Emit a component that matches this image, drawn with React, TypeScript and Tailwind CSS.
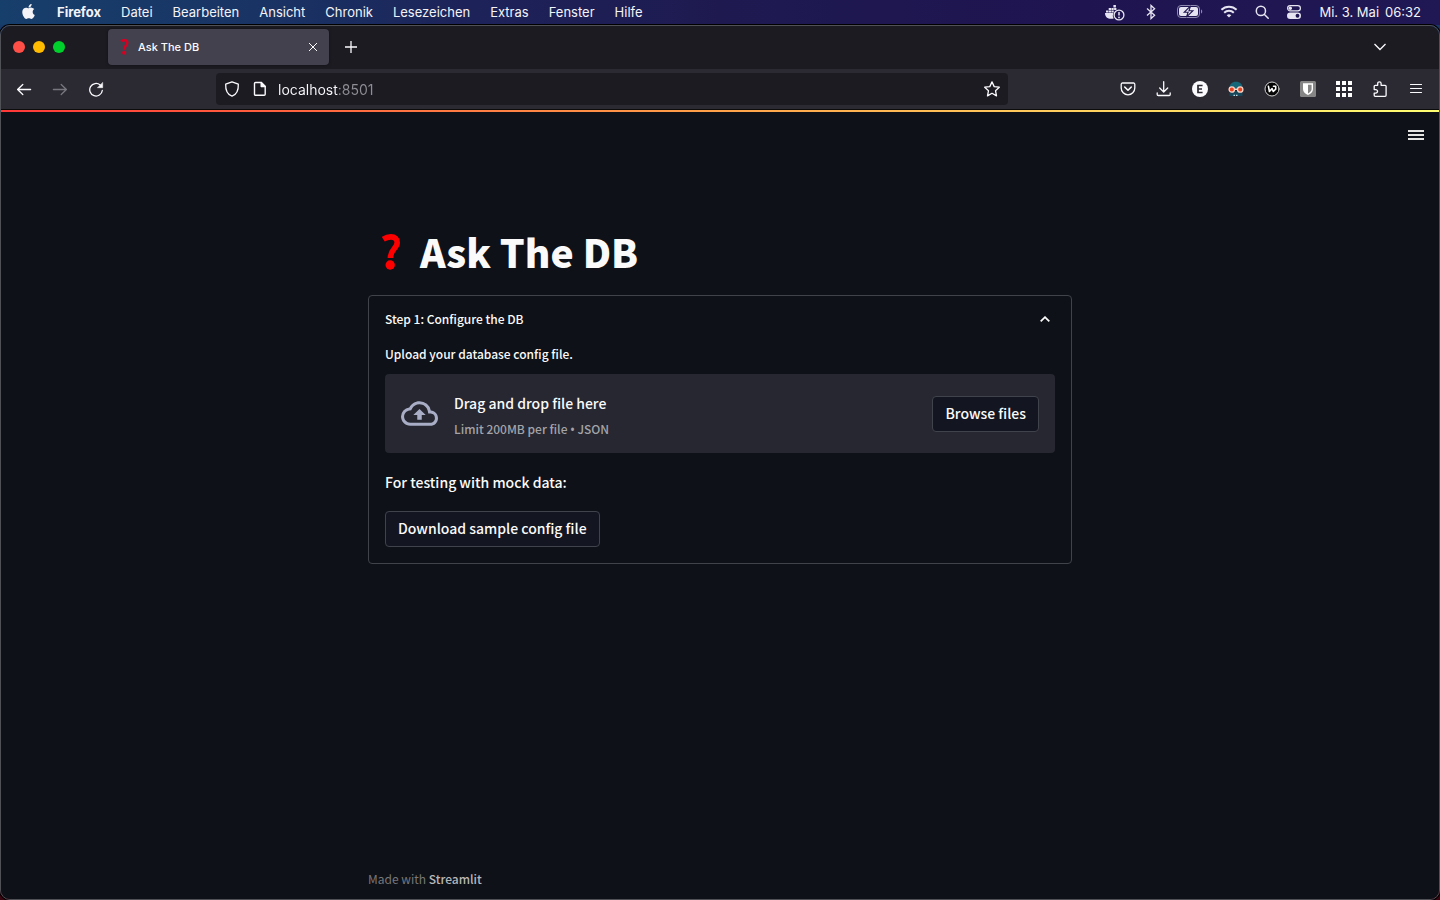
import type { ReactNode } from "react";
import { FaApple } from "react-icons/fa";

const MENUS = ["Datei", "Bearbeiten", "Ansicht", "Chronik", "Lesezeichen", "Extras", "Fenster", "Hilfe"];

function QuestionMark({ className }: { className: string }) {
  return (
    <svg viewBox="0 0 18 36" className={className} fill="none" stroke="currentColor" aria-hidden="true">
      <path d="M1.200 5.200C4 3.400 6.500 2.900 9 2.900c3.800 0 6.200 2 6.200 5.500 0 6-6.800 6.600-6.800 15.600" strokeWidth="5.600" />
      <circle cx="8.200" cy="31" r="4.700" fill="currentColor" stroke="none" />
    </svg>
  );
}

function DockerIcon() {
  return (
    <svg viewBox="0 0 20 18" className="h-[18px] w-5" aria-hidden="true">
      <g fill="#e6e4f0">
        <path d="M1 7.500h2.300v2H1zM3.700 7.500H6v2H3.700zM6.400 7.500h2.300v2H6.400zM3.700 5H6v2H3.700zM6.400 5h2.300v2H6.400zM9.100 5h2.300v2H9.100zM8.400 2h2.500v2.500H8.400z" />
        <path d="M0 10h8.300a6 6 0 0 0 .4 5.500C4 16.500 0 15 0 10z" />
      </g>
      <circle cx="14" cy="12" r="4.900" fill="none" stroke="#e6e4f0" strokeWidth="1.300" />
      <path d="M14 9v3.600" stroke="#e6e4f0" strokeWidth="1.500" />
      <circle cx="14" cy="14.400" r=".9" fill="#e6e4f0" />
    </svg>
  );
}

function BatteryIcon() {
  return (
    <svg viewBox="0 0 26 13" className="h-[13px] w-[26px]" aria-hidden="true">
      <rect x=".5" y=".5" width="22" height="12" rx="3.500" fill="none" stroke="#8d89ae" />
      <rect x="2" y="2" width="19" height="9" rx="2" fill="#e6e4f0" />
      <path d="M24 4.500c1.600.4 1.600 3.600 0 4z" fill="#8d89ae" />
      <path d="M13.600.8 7.200 7.300h3.900L9.400 12.200l6.500-6.500H12z" fill="#e6e4f0" stroke="#1f1652" strokeWidth="1.100" />
    </svg>
  );
}

function WifiIcon() {
  return (
    <svg viewBox="0 0 18 13" className="h-[13px] w-[18px]" fill="none" stroke="#e6e4f0" strokeWidth="2" aria-hidden="true">
      <path d="M1.400 4.800a10.900 10.900 0 0 1 15.200 0M4.200 7.800a6.900 6.900 0 0 1 9.600 0" />
      <path d="M9 12.600 6.700 10.300a3.300 3.300 0 0 1 4.600 0z" fill="#e6e4f0" stroke="none" />
    </svg>
  );
}

function ControlCenterIcon() {
  return (
    <svg viewBox="0 0 16 14" className="h-[14px] w-4" aria-hidden="true">
      <rect x="1.600" y=".6" width="12.800" height="5.300" rx="2.650" fill="none" stroke="#e6e4f0" strokeWidth="1.200" />
      <circle cx="4.300" cy="3.250" r="1.700" fill="#e6e4f0" />
      <rect x="1" y="7.500" width="14" height="6.500" rx="3.250" fill="#e6e4f0" />
      <circle cx="11.500" cy="10.750" r="1.900" fill="#1f1652" />
    </svg>
  );
}

function MenuBar() {
  return (
    <header className="flex h-[25px] shrink-0 items-center justify-between bg-[linear-gradient(90deg,#173f6c_0%,#193263_20%,#1d2359_32%,#1e1a50_50%,#1f1450_75%,#1f1854_100%)] pr-[19px] pb-[2px] pl-[21px] text-[13px] leading-4 text-[#f4f3f8]">
      <nav aria-label="Menüleiste" className="flex items-center gap-5">
        <button type="button" aria-label="Apple" className="mr-px">
          <FaApple className="h-[17px] w-[15px]" />
        </button>
        <button type="button" className="font-bold">Firefox</button>
        {MENUS.map((name) => (
          <button key={name} type="button">
            {name}
          </button>
        ))}
      </nav>
      <div className="flex items-center gap-[17px]">
        <DockerIcon />
        <svg viewBox="0 0 18 16" className="h-4 w-[18px]" fill="none" stroke="#e6e4f0" strokeWidth="1.300" aria-hidden="true">
          <path d="m5 4.600 7.600 6.700L9 14.600V1.400l3.600 3.300L5 11.400" />
        </svg>
        <BatteryIcon />
        <WifiIcon />
        <svg viewBox="0 0 14 14" className="size-[14px]" fill="none" stroke="#e6e4f0" strokeWidth="1.500" aria-hidden="true">
          <circle cx="5.900" cy="5.900" r="4.600" />
          <path d="m9.200 9.200 4 4" strokeLinecap="round" />
        </svg>
        <ControlCenterIcon />
        <div className="flex gap-[6px]">
          <span>Mi. 3. Mai</span>
          <time>06:32</time>
        </div>
      </div>
    </header>
  );
}

function TabStrip() {
  return (
    <div className="flex h-[43px] shrink-0 items-center bg-[#1c1b22] pb-[2px] pl-3">
      <div className="flex gap-2">
        <button type="button" aria-label="Schließen" className="size-3 rounded-full bg-[#ff4f47]" />
        <button type="button" aria-label="Minimieren" className="size-3 rounded-full bg-[#ffbb00]" />
        <button type="button" aria-label="Vollbild" className="size-3 rounded-full bg-[#00d02c]" />
      </div>
      <div className="ml-[43px] flex h-9 w-[221px] items-center rounded-sm bg-[#42414d] pr-[11px] pl-[11px] shadow-[0_0_3px_rgba(0,0,0,0.5)]">
        <QuestionMark className="h-4 w-[11px] text-[#d70022]" />
        <span className="ml-2 flex-1 text-[11px] leading-4 font-medium text-[#fbfbfe]">Ask The DB</span>
        <button type="button" aria-label="Tab schließen" className="text-[#fbfbfe]">
          <svg viewBox="0 0 10 10" className="size-[10px]" stroke="currentColor" strokeWidth="1">
            <path d="m1 1 8 8M9 1 1 9" />
          </svg>
        </button>
      </div>
      <button type="button" aria-label="Neuer Tab" className="ml-4 text-[#fbfbfe]">
        <svg viewBox="0 0 12 12" className="size-3" stroke="currentColor" strokeWidth="1.300">
          <path d="M6 0v12M0 6h12" />
        </svg>
      </button>
      <button type="button" aria-label="Alle Tabs auflisten" className="mr-[53px] ml-auto text-[#fbfbfe]">
        <svg viewBox="0 0 12 8" className="h-2 w-3" fill="none" stroke="currentColor" strokeWidth="1.300">
          <path d="m.5 1 5.500 5.500L11.500 1" />
        </svg>
      </button>
    </div>
  );
}

function ToolButton({ label, children, disabled }: { label: string; children: ReactNode; disabled?: boolean }) {
  return (
    <button
      type="button"
      aria-label={label}
      disabled={disabled}
      className="flex h-8 w-9 items-center justify-center text-[#fbfbfe] disabled:text-[#77767e]"
    >
      <svg
        viewBox="0 0 16 16"
        className="size-4"
        fill="none"
        stroke="currentColor"
        strokeWidth="1.300"
        strokeLinecap="round"
        strokeLinejoin="round"
      >
        {children}
      </svg>
    </button>
  );
}

function Toolbar() {
  return (
    <div className="flex h-10 shrink-0 items-center bg-[#2b2a33] px-[5px]">
      <div className="flex">
        <ToolButton label="Zurück">
          <path d="M14.600 8.500H1.600M6.800 3.500l-5.200 5 5.200 5" />
        </ToolButton>
        <ToolButton label="Vor" disabled>
          <path d="M1.400 8.500h13M9.200 3.500l5.200 5-5.200 5" />
        </ToolButton>
        <ToolButton label="Neu laden">
          <path d="M14.300 9.500A6.300 6.300 0 1 1 12.200 4" />
          <path d="M14.700 1.700v5H9.700z" fill="currentColor" strokeWidth=".5" />
        </ToolButton>
      </div>
      <div className="mx-[102px] flex h-8 min-w-0 flex-1 items-center rounded-sm bg-[#1c1b22] px-2 text-[#fbfbfe]">
        <svg viewBox="0 0 16 16" className="size-4" fill="none" stroke="currentColor" strokeWidth="1.300" strokeLinejoin="round" aria-hidden="true">
          <path d="M8 .8 14.300 3.200C14.600 9 12.500 13.400 8 15.200 3.500 13.400 1.400 9 1.700 3.200z" />
        </svg>
        <svg viewBox="0 0 16 16" className="ml-3 size-4" fill="none" stroke="currentColor" strokeWidth="1.400" strokeLinejoin="round" aria-hidden="true">
          <path d="M3.500 1.500h5.700l4 4v7.800a1 1 0 0 1-1 1H3.500a1 1 0 0 1-1-1V2.500a1 1 0 0 1 1-1z" />
          <path d="M9.200 1.500v4h4z" fill="currentColor" />
        </svg>
        <input
          type="text"
          aria-label="Adresse"
          defaultValue="localhost:8501"
          className="ml-[10px] h-6 min-w-0 flex-1 bg-transparent bg-[linear-gradient(90deg,#fbfbfe_60px,#8f8e96_60px)] bg-clip-text text-[14px] text-transparent caret-white outline-none"
        />
        <button type="button" aria-label="Lesezeichen setzen">
          <svg viewBox="0 0 16 16" className="size-4" fill="none" stroke="currentColor" strokeWidth="1.300" strokeLinejoin="round">
            <path d="m8 .9 2.200 4.700 5.100.6-3.800 3.500 1 5.200L8 12.300l-4.500 2.600 1-5.200L.7 6.200l5.100-.6z" />
          </svg>
        </button>
      </div>
      <div className="flex">
        <ToolButton label="Pocket">
          <path d="M2.500 2h11a1.300 1.300 0 0 1 1.300 1.300V7a6.800 6.800 0 0 1-13.600 0V3.300A1.300 1.300 0 0 1 2.500 2z" />
          <path d="m4.700 6 3.300 3.200L11.300 6" strokeWidth="1.600" />
        </ToolButton>
        <ToolButton label="Downloads">
          <path d="M7.700.7v10M3.700 7l4 4 4-4M1.200 12v1.500a1 1 0 0 0 1 1h11a1 1 0 0 0 1-1V12" />
        </ToolButton>
        <ToolButton label="Konto">
          <circle cx="8" cy="8" r="8" fill="#fbfbfe" stroke="none" />
          <path d="M10.600 4.500H6v7h4.600M6 8h4" stroke="#2b2a33" strokeWidth="1.700" strokeLinecap="butt" strokeLinejoin="miter" />
        </ToolButton>
        <ToolButton label="Privatsphäre">
          <path d="M1.500 7.500C1.500 3 4 .8 8 .8s6.500 2.200 6.500 6.700z" fill="#17677a" stroke="none" />
          <path d="M1.500 10h13v5h-13z" fill="#17475b" stroke="none" />
          <path d="M5.500 14.300h5" stroke="#b9dce5" strokeWidth="1.300" strokeDasharray="1.500 1" strokeLinecap="butt" />
          <path d="M6 8.300h4" stroke="#f2d9d1" strokeWidth="1.500" />
          <circle cx="3.800" cy="8.500" r="2.700" fill="#e8421f" stroke="#f7d3c6" strokeWidth="1.300" />
          <circle cx="12.200" cy="8.500" r="2.700" fill="#e8421f" stroke="#f7d3c6" strokeWidth="1.300" />
        </ToolButton>
        <ToolButton label="Wappalyzer">
          <circle cx="8" cy="8" r="7" fill="#050505" stroke="#d4d4d4" strokeWidth="1" />
          <path d="m4.400 5.200 1 5.300L8.100 7.600l1.200 2.900 2.400-2.300V5.200H9.500" stroke="#fff" strokeWidth="1.600" />
        </ToolButton>
        <ToolButton label="Bitwarden">
          <rect width="16" height="16" rx="1.500" fill="#858585" stroke="none" />
          <path d="M3 2.300h10V8c0 3-2.300 4.900-5 6-2.700-1.100-5-3-5-6z" fill="#fff" stroke="none" />
          <path d="M8 3.700h3.600V8c0 2-1.500 3.400-3.600 4.500z" fill="#858585" stroke="none" />
        </ToolButton>
        <ToolButton label="Apps">
          <path d="M0 0h4v4H0zM6 0h4v4H6zM12 0h4v4h-4zM0 6h4v4H0zM6 6h4v4H6zM12 6h4v4h-4zM0 12h4v4H0zM6 12h4v4H6zM12 12h4v4h-4z" fill="#fff" stroke="none" />
        </ToolButton>
        <ToolButton label="Erweiterungen">
          <path d="M2.200 5.300a1 1 0 0 1 1-1h2.500V2.500a1.700 1.700 0 0 1 3.400 0v1.800h4a1 1 0 0 1 1 1v9a1 1 0 0 1-1 1H3.200a1 1 0 0 1-1-1v-2.200h1.600a1.700 1.700 0 0 0 0-3.500H2.200z" />
        </ToolButton>
        <ToolButton label="Menü">
          <path d="M2.500 3.500h11M2.500 7.500h11M2.500 11.500h11" strokeWidth="1.200" />
        </ToolButton>
      </div>
    </div>
  );
}

function Expander() {
  return (
    <details open className="rounded-sm border border-[#41434a]">
      <summary className="flex h-[46px] cursor-pointer list-none items-center justify-between px-4 text-[12px] leading-5">
        <span>Step 1: Configure the DB</span>
        <svg viewBox="0 0 10 6" className="mr-[5px] h-[6px] w-[10px]" fill="none" stroke="currentColor" strokeWidth="1.800" aria-hidden="true">
          <path d="M.7 5.300 5 1.200l4.300 4.100" />
        </svg>
      </summary>
      <div className="flex flex-col items-start gap-4 px-4 pb-4">
        <div className="w-full">
          <label htmlFor="config-file" className="mb-2 block text-[12px] leading-6">
            Upload your database config file.
          </label>
          <div className="flex items-center rounded-sm bg-[#262730] px-4 py-[14px]">
            <svg viewBox="0 0 24 24" className="size-[37px]" fill="#a9aec6" aria-hidden="true">
              <path d="M19.350 10.040A7.490 7.490 0 0 0 12 4C9.110 4 6.600 5.640 5.350 8.040A5.994 5.994 0 0 0 0 14c0 3.310 2.690 6 6 6h13c2.760 0 5-2.240 5-5 0-2.640-2.050-4.780-4.650-4.960zM19 18H6c-2.210 0-4-1.790-4-4 0-2.050 1.530-3.760 3.560-3.970l1.070-.11.500-.950A5.469 5.469 0 0 1 12 6c2.620 0 4.880 1.860 5.390 4.430l.3 1.500 1.530.11A2.980 2.980 0 0 1 22 15c0 1.650-1.350 3-3 3zM8 13h2.550v3h2.900v-3H16l-4-4z" />
            </svg>
            <div className="ml-4 flex-1 pt-[2px]">
              <div className="mb-[3px] text-[14px] leading-[26px]">Drag and drop file here</div>
              <div className="text-[12px] leading-5 text-[#a3a3a8]">
                Limit 200MB per file <span className="font-['Noto_Sans',sans-serif] leading-none">•</span> JSON
              </div>
            </div>
            <input id="config-file" type="file" accept="application/json" className="hidden" />
            <button type="button" className="h-9 rounded-sm border border-[#41434c] bg-[#131520] px-3 pb-[2px] text-[14px] leading-6">
              Browse files
            </button>
          </div>
        </div>
        <p className="text-[14px] leading-[26px]">For testing with mock data:</p>
        <button type="button" className="h-9 rounded-sm border border-[#41434c] bg-[#131520] px-3 pb-[2px] text-[14px] leading-6">
          Download sample config file
        </button>
      </div>
    </details>
  );
}

function StreamlitPage() {
  return (
    <div className="flex flex-1 flex-col bg-[#0e1117] font-['Noto_Sans_CJK_SC',sans-serif] font-medium text-[#fafafa]">
      <div className="h-[3px] shrink-0 border-t border-[#0c0c0d] bg-[linear-gradient(90deg,#ff3838,#ffa24a_50%,#ffff73)]" />
      <div className="flex justify-end pt-[18px] pr-[15px]">
        <button type="button" aria-label="Hauptmenü">
          <svg viewBox="0 0 16 10" className="h-[10px] w-4" fill="#e4e4e2">
            <path d="M0 0h16v2H0zM0 4h16v2H0zM0 8h16v2H0z" />
          </svg>
        </button>
      </div>
      <main className="mx-auto w-full max-w-[736px] flex-1 px-4 pt-[85px]">
        <h1 className="mb-[17px] flex items-center pl-[14px] text-[39px] leading-[53px] font-black">
          <QuestionMark className="mr-5 h-9 w-[18px] text-[#f00]" />
          Ask The DB
        </h1>
        <Expander />
      </main>
      <footer className="mx-auto w-full max-w-[736px] px-4 pb-[10px] text-[12px] leading-5 font-normal text-[#76777b]">
        Made with{" "}
        <a href="#streamlit" className="font-medium text-[#b6b7ba]">
          Streamlit
        </a>
      </footer>
    </div>
  );
}

export default function App() {
  return (
    <div className="flex min-h-screen flex-col bg-[linear-gradient(180deg,#173f6c,#1f1450_20%,#3a0612)] font-[Inter,'Liberation_Sans',sans-serif]">
      <MenuBar />
      <div className="flex flex-1 flex-col overflow-hidden rounded-[10px] border border-[#505057] shadow-[0_0_0_1px_#000]">
        <TabStrip />
        <Toolbar />
        <StreamlitPage />
      </div>
    </div>
  );
}
